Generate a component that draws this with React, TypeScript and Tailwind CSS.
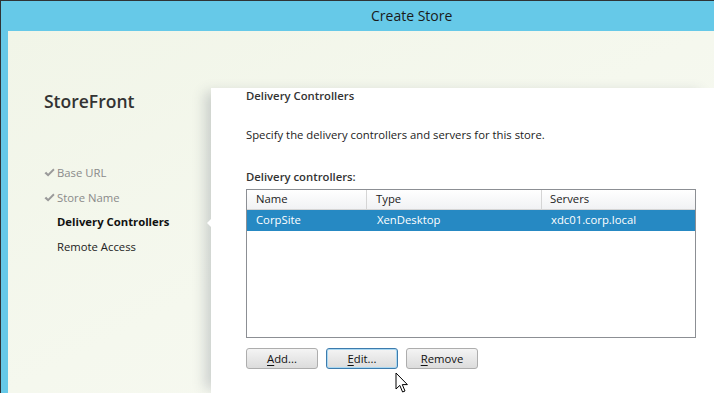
import React from 'react';

const font = { fontFamily: '"Open Sans", "Noto Sans", sans-serif' };

const steps = [
  { label: 'Base URL', done: true },
  { label: 'Store Name', done: true },
  { label: 'Delivery Controllers', active: true },
  { label: 'Remote Access' },
];

const CheckIcon = () => (
  <svg width="11" height="10" viewBox="0 0 11 10" className="shrink-0">
    <path d="M0.5 5.2 L2.2 3.8 L4.1 5.8 L9.3 0.6 L10.6 1.9 L4.1 8.6 Z" fill="#9a9a9a" />
  </svg>
);

const Cursor = () => (
  <svg width="14" height="22" viewBox="0 0 14 22" className="absolute left-[394px] top-[371px]">
    <path d="M1 1 L1 17 L4.8 13.4 L7.6 20 L10 19 L7.3 12.6 L12.4 12.6 Z" fill="#fff" stroke="#000" strokeWidth="1" strokeLinejoin="round" />
  </svg>
);

const Btn: React.FC<{ k: string; rest: string; focused?: boolean }> = ({ k, rest, focused }) => (
  <button
    className={`w-[72px] h-[21px] rounded-[3px] border text-[11.3px] text-[#111] bg-gradient-to-b from-[#f4f4f4] to-[#dcdcdc] leading-none ${
      focused ? 'border-[#3d7bad] shadow-[inset_0_0_0_1px_#a9d8f2]' : 'border-[#adadad]'
    }`}
  >
    <span className="underline underline-offset-2">{k}</span>
    {rest}
  </button>
);

export default function App() {
  return (
    <div
      className="relative w-[714px] h-[393px] overflow-hidden border-t border-l border-[#2f3336] bg-[#66c9e8] flex flex-col"
      style={font}
    >
      {/* title bar */}
      <div className="h-[30px] shrink-0 flex items-center pl-[370px] pb-[1px] text-[14px] text-[#1a1a1a]">Create Store</div>

      <div className="flex-1 flex pl-[7px]">
        <div className="flex-1 flex bg-gradient-to-br from-[#f1f5e8] via-[#f5f8ee] to-[#f8f9f3]">
          {/* sidebar */}
          <div className="w-[203px] shrink-0 pl-[36px] pt-[58px]">
            <div className="text-[17.5px] font-semibold text-[#333] leading-[24px]">StoreFront</div>
            <div className="mt-[48px] flex flex-col">
              {steps.map((s) => (
                <div key={s.label} className="h-[24.7px] flex items-center">
                  <div className="w-[13px] flex items-center">{s.done && <CheckIcon />}</div>
                  <span
                    className={`text-[11.3px] ${
                      s.active ? 'font-bold text-[#111]' : s.done ? 'text-[#8a8a8a]' : 'text-[#222]'
                    }`}
                  >
                    {s.label}
                  </span>
                </div>
              ))}
            </div>
          </div>

          {/* main panel */}
          <div className="relative flex-1 mt-[57px] bg-white shadow-[-10px_0_12px_-4px_rgba(60,70,90,0.22)] pl-[35px] pr-[18px]">
            <div className="absolute left-[-4px] top-[129px] w-0 h-0 border-y-[6px] border-y-transparent border-r-[6px] border-r-white" />
            <div className="h-[16px] leading-[16px] text-[11.3px] font-semibold text-[#333]">Delivery Controllers</div>
            <div className="mt-[23px] text-[11.3px] leading-[16px] text-[#222]">
              Specify the delivery controllers and servers for this store.
            </div>
            <div className="mt-[26px] text-[11.3px] leading-[16px] font-semibold text-[#333]">Delivery controllers:</div>

            <div className="mt-[4px] w-[450px] h-[149px] border border-[#8c8f94] bg-white">
              <div className="grid grid-cols-[120px_175px_1fr] h-[20px] bg-gradient-to-b from-white to-[#f1f2f4] border-b border-[#d5d5d5] text-[11.3px] text-[#222]">
                <div className="pl-[9px] flex items-center border-r border-[#d5d5d5]">Name</div>
                <div className="pl-[9px] flex items-center border-r border-[#d5d5d5]">Type</div>
                <div className="pl-[8px] flex items-center">Servers</div>
              </div>
              <div className="grid grid-cols-[120px_175px_1fr] h-[21px] bg-[#2689c3] text-[11.3px] text-white">
                <div className="pl-[9px] flex items-center">CorpSite</div>
                <div className="pl-[10px] flex items-center">XenDesktop</div>
                <div className="pl-[9px] flex items-center">xdc01.corp.local</div>
              </div>
            </div>

            <div className="mt-[10px] flex gap-[8px]">
              <Btn k="A" rest="dd..." />
              <Btn k="E" rest="dit..." focused />
              <Btn k="R" rest="emove" />
            </div>
          </div>
        </div>
      </div>
      <Cursor />
    </div>
  );
}
